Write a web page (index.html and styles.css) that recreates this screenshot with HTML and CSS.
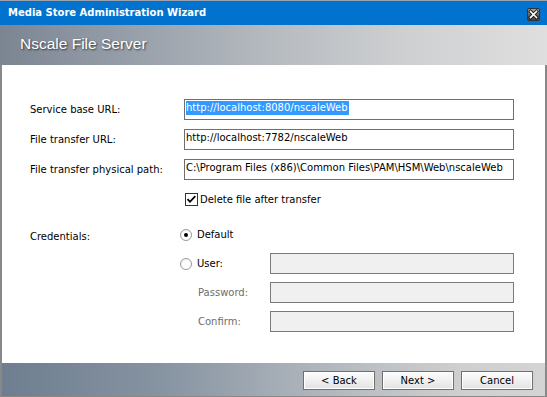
FILE: index.html
```html
<!DOCTYPE html>
<html lang="en">
<head>
    <meta charset="UTF-8">
    <title>Media Store Administration Wizard</title>
    <link rel="stylesheet" href="styles.css">
</head>
<body>
    <div class="wizard">
        <!-- Window caption -->
        <div class="titlebar">
            <span class="title">Media Store Administration Wizard</span>
            <span class="closeBtn">
                <svg width="11" height="11" viewBox="0 0 11 11">
                    <path d="M2.5 2.5 L8.5 8.5 M8.5 2.5 L2.5 8.5" stroke="#1a1a1a" stroke-width="3.4" stroke-linecap="square"/>
                    <path d="M2.5 2.5 L8.5 8.5 M8.5 2.5 L2.5 8.5" stroke="#fff" stroke-width="1.6" stroke-linecap="square"/>
                </svg>
            </span>
        </div>

        <div class="banner">
            <h1>Nscale File Server</h1>
        </div>

        <div class="page">
            <div class="row">
                <label class="label">Service base URL:</label>
                <div class="field"><span class="selected">http://localhost:8080/nscaleWeb</span></div>
            </div>
            <div class="row">
                <label class="label">File transfer URL:</label>
                <div class="field"><span>http://localhost:7782/nscaleWeb</span></div>
            </div>
            <div class="row">
                <label class="label">File transfer physical path:</label>
                <div class="field"><span>C:\Program Files (x86)\Common Files\PAM\HSM\Web\nscaleWeb</span></div>
            </div>
            <div class="row">
                <span class="label"></span>
                <span class="checkbox">
                    <svg width="11" height="11" viewBox="0 0 11 11">
                        <path d="M1.5 5.2 L4 7.8 L9.3 2.2" fill="none" stroke="#000" stroke-width="1.8"/>
                    </svg>
                </span>
                <span>Delete file after transfer</span>
            </div>

            <div class="creds">
                <span class="label">Credentials:</span>
                <span class="option"><span class="radio checked"></span>Default</span>
                <span></span>

                <span></span>
                <span class="option"><span class="radio"></span>User:</span>
                <div class="field disabled"></div>

                <span></span>
                <span class="subLabel">Password:</span>
                <div class="field disabled"></div>

                <span></span>
                <span class="subLabel">Confirm:</span>
                <div class="field disabled"></div>
            </div>
        </div>

        <div class="footer">
            <button class="btn">&lt; Back</button>
            <button class="btn">Next &gt;</button>
            <button class="btn">Cancel</button>
        </div>
    </div>
</body>
</html>
```

FILE: styles.css
```css
body {
    margin: 0;
    font-family: "DejaVu Sans", Tahoma, sans-serif;
    font-size: 10px;
    color: #000;
    background-color: #fff;
}
.wizard {
    width: 547px;
    height: 397px;
    display: flex;
    flex-direction: column;
}
.titlebar {
    height: 25px;
    box-sizing: border-box;
    border-top: 1px solid #9aa3ad;
    background-color: #0173cf;
    display: flex;
    align-items: center;
    justify-content: space-between;
    padding: 0 7px 0 8px;
}
.title {
    color: #fff;
    font-weight: bold;
    line-height: 12px;
}
.closeBtn {
    width: 13px;
    height: 13px;
    box-sizing: border-box;
    border: 1px solid #333;
    border-radius: 2px;
    background: linear-gradient(#a8a8a8, #5a5a5a 60%, #454545);
    display: flex;
    align-items: center;
    justify-content: center;
    margin-top: 2px;
}
.banner {
    height: 40px;
    box-sizing: border-box;
    padding: 10px 0 0 20px;
    background: linear-gradient(to right, #7b8592 0%, #98a0aa 25%, #b6bbc0 50%, #cfd0d2 75%, #dfdfdf 100%);
}
.banner h1 {
    margin: 0;
    font-family: "Liberation Sans", Arial, sans-serif;
    font-size: 15.5px;
    font-weight: normal;
    line-height: 18px;
    color: #fff;
    text-shadow: 1px 1px 2px rgba(0, 0, 0, 0.65);
}
.page {
    flex: 1;
    border-left: 2px solid #888;
    border-right: 2px solid #888;
    padding: 34px 0 0 28px;
}
.row {
    display: flex;
    align-items: center;
    height: 21px;
    margin-bottom: 9px;
}
.label {
    width: 154px;
    flex-shrink: 0;
}
.field {
    width: 330px;
    height: 21px;
    box-sizing: border-box;
    border: 1px solid #6f6f6f;
    background-color: #fff;
    padding: 1px 0 0 1px;
    white-space: nowrap;
    overflow: hidden;
}
.field span {
    display: inline-block;
    height: 14px;
    line-height: 14px;
    padding-right: 1px;
}
.field .selected {
    background-color: #3399ff;
    color: #fff;
}
.field.disabled {
    width: 244px;
    background-color: #f0f0f0;
    border-color: #7a7a7a;
}
.checkbox {
    width: 13px;
    height: 13px;
    box-sizing: border-box;
    border: 1px solid #333;
    background-color: #fff;
    margin: 0 2px 0 1px;
    display: flex;
    align-items: center;
    justify-content: center;
}
.creds {
    margin-top: 14px;
    display: grid;
    grid-template-columns: 150px 90px 244px;
    grid-auto-rows: 21px;
    row-gap: 8px;
    align-items: center;
}
.creds .label {
    width: auto;
    padding-top: 3px;
}
.option {
    display: flex;
    align-items: center;
}
.radio {
    width: 12px;
    height: 12px;
    box-sizing: border-box;
    border: 1px solid #9a9a9a;
    border-radius: 50%;
    background: radial-gradient(circle at 60% 60%, #fff 45%, #e6e6e6 100%);
    margin-right: 5px;
    display: flex;
    align-items: center;
    justify-content: center;
}
.radio.checked::after {
    content: "";
    width: 4px;
    height: 4px;
    border-radius: 50%;
    background-color: #000;
}
.subLabel {
    padding-left: 18px;
    color: #6d6d6d;
}
.footer {
    height: 34px;
    box-sizing: border-box;
    border: 2px solid #888;
    border-top: none;
    border-bottom-width: 1px;
    padding: 8px 12px 0 0;
    display: flex;
    justify-content: flex-end;
    align-items: flex-start;
    gap: 7px;
    background: linear-gradient(to right, #6e7e90 0%, #8794a2 30%, #a4acb5 50%, #bcc0c4 68%, #cfcfcf 85%, #d4d4d4 100%);
}
.btn {
    width: 72px;
    height: 19px;
    border: 1px solid #707070;
    border-radius: 0;
    background: linear-gradient(#fdfdfd, #f0f0f0 50%, #e2e2e2);
    box-shadow: inset 0 0 0 1px #fff;
    font-family: "DejaVu Sans", Tahoma, sans-serif;
    font-size: 10px;
    color: #000;
    padding: 0;
    line-height: 17px;
}
```
